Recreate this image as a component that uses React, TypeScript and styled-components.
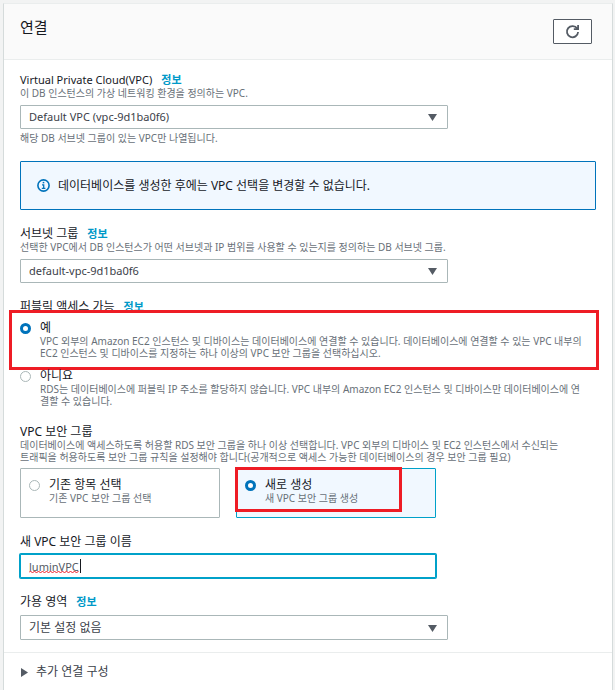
import React, { useState } from "react";
import styled, { createGlobalStyle, css } from "styled-components";

const GlobalStyle = createGlobalStyle`
  *, *::before, *::after { box-sizing: border-box; }
  body {
    margin: 0;
    background: #f2f3f3;
    color: #16191f;
    font: 12px/14px "Noto Sans", "Noto Sans CJK KR", sans-serif;
  }
  button, input, select { font: inherit; }
`;

const Page = styled.main`
  display: flex;
  flex-direction: column;
  min-height: 100vh;
  padding: 3px 2px 0 3px;
`;

const Panel = styled.section`
  flex: 1;
  background: #fff;
  border: 1px solid #d5dbdb;
  border-top-color: #eaeded;
  border-bottom: 0;
`;

const Header = styled.header`
  display: flex;
  align-items: flex-start;
  justify-content: space-between;
  height: 56px;
  padding: 15px 20px 0 16px;
  background: #fafafa;
  border-bottom: 1px solid #eaeded;
`;

const Title = styled.h2`
  margin: 0;
  font-size: 15px;
  line-height: 16px;
  font-weight: 400;
`;

const RefreshButton = styled.button`
  display: flex;
  align-items: center;
  justify-content: center;
  width: 39px;
  height: 25px;
  padding: 0;
  background: #fff;
  border: 1px solid #545b64;
  border-radius: 1px;
  color: #545b64;
`;

const Form = styled.form`
  padding: 13px 16px 9px;
  border-bottom: 1px solid #eaeded;
`;

const Field = styled.div<{ $gap: number }>`
  margin-bottom: ${(p) => p.$gap}px;
`;

const FieldSet = styled.fieldset<{ $gap: number }>`
  min-width: 0;
  margin: 0 0 ${(p) => p.$gap}px;
  padding: 0;
  border: 0;
`;

const labelText = css`
  display: flex;
  align-items: center;
  gap: 9px;
  height: 14px;
  padding: 0;
`;

const LabelRow = styled.div<{ $small?: boolean }>`
  ${labelText}
  ${(p) => p.$small && "font-size: 11px;"}
`;

const Legend = styled.legend`
  ${labelText}
`;

const InfoLink = styled.a`
  color: #0099c8;
  font-size: 11px;
  font-weight: 600;
  text-decoration: none;
`;

const Hint = styled.span`
  display: block;
  color: #687078;
  font-size: 10px;
  line-height: 12px;
  white-space: nowrap;
`;

const SelectBox = styled.div<{ $height: number }>`
  position: relative;
  max-width: 428px;
  height: ${(p) => p.$height}px;
  margin: 6px 0 3px;

  svg {
    position: absolute;
    top: 50%;
    right: 11px;
    margin-top: -3px;
    pointer-events: none;
  }
`;

const Select = styled.select<{ $small: boolean }>`
  appearance: none;
  display: block;
  width: 100%;
  height: 100%;
  padding: 0 28px 0 8px;
  background: #fff;
  border: 1px solid #aab7b8;
  border-radius: 1px;
  color: #3b4149;
  font-size: ${(p) => (p.$small ? 11 : 12)}px;
`;

const Alert = styled.div`
  display: flex;
  align-items: center;
  gap: 8px;
  min-height: 49px;
  margin: 17px 0;
  padding: 0 16px;
  background: #f1f8ff;
  border: 1px solid #0073bb;
  border-radius: 1px;
`;

const RadioOption = styled.label`
  position: relative;
  display: grid;
  grid-template-columns: 11px 1fr;
  column-gap: 9px;
  align-items: start;
`;

const Radio = styled.input`
  appearance: none;
  width: 11px;
  height: 11px;
  margin: 2px 0 0;
  background: #fff;
  border: 1px solid #aab7b8;
  border-radius: 50%;

  &:checked {
    border: 3px solid #0073bb;
  }
`;

const RadioList = styled.div`
  display: grid;
  gap: 10px;
  margin-top: 7px;
`;

const Tiles = styled.div`
  display: grid;
  grid-template-columns: 1fr 1fr;
  gap: 16px;
  max-width: 416px;
  margin-top: 5px;
`;

const Tile = styled(RadioOption)<{ $selected: boolean }>`
  height: 50px;
  padding: 9px 8px;
  background: ${(p) => (p.$selected ? "#f1f8ff" : "#fff")};
  border: 1px solid ${(p) => (p.$selected ? "#00a1c9" : "#aab7b8")};
  border-radius: 1px;
`;

const Highlight = styled.span<{ $inset: string }>`
  position: absolute;
  inset: ${(p) => p.$inset};
  border: 3px solid #ee1c25;
  pointer-events: none;
`;

const InputBox = styled.div`
  position: relative;
  max-width: 416px;
  margin-top: 5px;

  svg {
    position: absolute;
    top: 5px;
    left: 9px;
  }
`;

const TextInput = styled.input`
  display: block;
  width: 100%;
  height: 24px;
  padding: 0 8px;
  border: 1px solid #00a1c9;
  border-radius: 1px;
  box-shadow: 0 0 0 1px #00a1c9;
  color: #545b64;
  font-size: 11px;
  outline: 0;
`;

const Expander = styled.button`
  display: flex;
  align-items: center;
  gap: 8px;
  padding: 12px 17px;
  background: none;
  border: 0;
  color: #3b4149;
`;

const RefreshIcon = () => (
  <svg width="15" height="15" viewBox="0 0 15 15" fill="none" stroke="currentColor" strokeWidth="1.8" aria-hidden="true">
    <path d="M12.2 4.6A5.6 5.6 0 1 0 13.1 8" />
    <path d="M13.1 1v4.2H8.8" />
    <path d="M10.5 5.2 13.1 2.8v2.4z" fill="currentColor" stroke="none" />
  </svg>
);

const InfoIcon = () => (
  <svg width="13" height="13" viewBox="0 0 13 13" fill="none" stroke="#0073bb" aria-hidden="true">
    <circle cx="6.5" cy="6.5" r="5.6" strokeWidth="1.6" />
    <path d="M5 5.8h1.7v3.4M4.8 9.3h3.6" strokeWidth="1.3" />
    <path d="M5.7 3.6h1.6" strokeWidth="1.5" />
  </svg>
);

const DownArrow = () => (
  <svg width="9" height="7" viewBox="0 0 9 7" aria-hidden="true">
    <path d="M0 0h9L4.5 7z" fill="#545b64" />
  </svg>
);

const RightArrow = () => (
  <svg width="7" height="9" viewBox="0 0 7 9" aria-hidden="true">
    <path d="M0 0v9l7-4.5z" fill="#545b64" />
  </svg>
);

const SpellingMark = () => (
  <svg width="52" height="15" viewBox="0 0 52 15" fill="none" aria-hidden="true">
    <path
      d="M0 13.5l1.5-1.5 2 2 2-2 2 2 2-2 2 2 2-2 2 2 2-2 2 2 2-2 2 2 2-2 2 2 2-2 2 2 2-2 2 2 2-2 2 2 2-2 2 2 2-2 2 2 2-2"
      stroke="#ee1c25"
    />
    <path d="M51.5 0v14" stroke="#16191f" />
  </svg>
);

interface SelectFieldProps {
  id: string;
  label: string;
  value: string;
  height: number;
  gap: number;
  smallLabel?: boolean;
  smallValue?: boolean;
  description?: string;
  note?: string;
}

function SelectField({
  id,
  label,
  value,
  height,
  gap,
  smallLabel = false,
  smallValue = false,
  description,
  note,
}: SelectFieldProps) {
  return (
    <Field $gap={gap}>
      <LabelRow $small={smallLabel}>
        <label htmlFor={id}>{label}</label>
        <InfoLink href="#info">정보</InfoLink>
      </LabelRow>
      {description && <Hint>{description}</Hint>}
      <SelectBox $height={height}>
        <Select id={id} defaultValue={value} $small={smallValue}>
          <option>{value}</option>
        </Select>
        <DownArrow />
      </SelectBox>
      {note && <Hint>{note}</Hint>}
    </Field>
  );
}

export default function App() {
  const [access, setAccess] = useState("yes");
  const [group, setGroup] = useState("new");
  const [name, setName] = useState("luminVPC");

  return (
    <Page>
      <GlobalStyle />
      <Panel>
        <Header>
          <Title>연결</Title>
          <RefreshButton type="button" aria-label="새로 고침">
            <RefreshIcon />
          </RefreshButton>
        </Header>
        <Form>
          <SelectField
            id="vpc"
            label="Virtual Private Cloud(VPC)"
            value="Default VPC (vpc-9d1ba0f6)"
            description="이 DB 인스턴스의 가상 네트워킹 환경을 정의하는 VPC."
            note="해당 DB 서브넷 그룹이 있는 VPC만 나열됩니다."
            height={24}
            gap={0}
            smallLabel
            smallValue
          />
          <Alert>
            <InfoIcon />
            <span>데이터베이스를 생성한 후에는 VPC 선택을 변경할 수 없습니다.</span>
          </Alert>
          <SelectField
            id="subnet"
            label="서브넷 그룹"
            value="default-vpc-9d1ba0f6"
            description="선택한 VPC에서 DB 인스턴스가 어떤 서브넷과 IP 범위를 사용할 수 있는지를 정의하는 DB 서브넷 그룹."
            height={24}
            gap={17}
            smallValue
          />
          <FieldSet $gap={18}>
            <Legend>
              퍼블릭 액세스 가능
              <InfoLink href="#info">정보</InfoLink>
            </Legend>
            <RadioList>
              <RadioOption>
                <Radio type="radio" name="access" checked={access === "yes"} onChange={() => setAccess("yes")} />
                <span>
                  예
                  <Hint>
                    VPC 외부의 Amazon EC2 인스턴스 및 디바이스는 데이터베이스에 연결할 수 있습니다. 데이터베이스에 연결할 수 있는 VPC 내부의
                    <br />
                    EC2 인스턴스 및 디바이스를 지정하는 하나 이상의 VPC 보안 그룹을 선택하십시오.
                  </Hint>
                </span>
                <Highlight $inset="-11px -3px -11px -11px" />
              </RadioOption>
              <RadioOption>
                <Radio type="radio" name="access" checked={access === "no"} onChange={() => setAccess("no")} />
                <span>
                  아니요
                  <Hint>
                    RDS는 데이터베이스에 퍼블릭 IP 주소를 할당하지 않습니다. VPC 내부의 Amazon EC2 인스턴스 및 디바이스만 데이터베이스에 연<br />
                    결할 수 있습니다.
                  </Hint>
                </span>
              </RadioOption>
            </RadioList>
          </FieldSet>
          <FieldSet $gap={17}>
            <Legend>VPC 보안 그룹</Legend>
            <Hint>
              데이터베이스에 액세스하도록 허용할 RDS 보안 그룹을 하나 이상 선택합니다. VPC 외부의 디바이스 및 EC2 인스턴스에서 수신되는
              <br />
              트래픽을 허용하도록 보안 그룹 규칙을 설정해야 합니다(공개적으로 액세스 가능한 데이터베이스의 경우 보안 그룹 필요)
            </Hint>
            <Tiles>
              <Tile $selected={group === "existing"}>
                <Radio type="radio" name="group" checked={group === "existing"} onChange={() => setGroup("existing")} />
                <span>
                  기존 항목 선택
                  <Hint>기존 VPC 보안 그룹 선택</Hint>
                </span>
              </Tile>
              <Tile $selected={group === "new"}>
                <Radio type="radio" name="group" checked={group === "new"} onChange={() => setGroup("new")} />
                <span>
                  새로 생성
                  <Hint>새 VPC 보안 그룹 생성</Hint>
                </span>
                <Highlight $inset="-2px 33px 5px -2px" />
              </Tile>
            </Tiles>
          </FieldSet>
          <Field $gap={17}>
            <LabelRow>
              <label htmlFor="group-name">새 VPC 보안 그룹 이름</label>
            </LabelRow>
            <InputBox>
              <TextInput
                id="group-name"
                type="text"
                spellCheck={false}
                value={name}
                onChange={(event) => setName(event.target.value)}
              />
              <SpellingMark />
            </InputBox>
          </Field>
          <SelectField id="zone" label="가용 영역" value="기본 설정 없음" height={25} gap={0} />
        </Form>
        <Expander type="button" aria-expanded="false">
          <RightArrow />
          추가 연결 구성
        </Expander>
      </Panel>
    </Page>
  );
}
